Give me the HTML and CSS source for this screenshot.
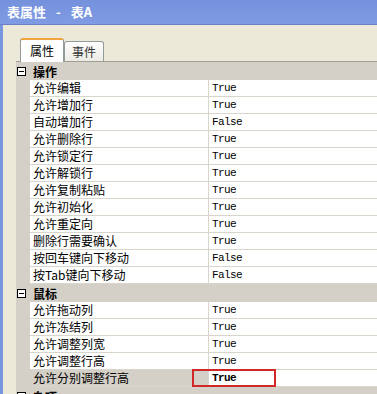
FILE: index.html
```html
<!DOCTYPE html>
<html>
<head>
<meta charset="utf-8">
<link rel="stylesheet" href="styles.css">
</head>
<body>
<div class="window">
  <div class="titlebar">表属性<span class="dash">-</span>表A</div>
  <div class="frame">
    <div class="client">
      <div class="tabs">
        <div class="tab active">属性</div>
        <div class="tab">事件</div>
      </div>
      <div class="grid">
        <div class="cat"><span class="box"></span><span class="cat-name">操作</span></div>
        <div class="row"><div class="name">允许编辑</div><div class="value">True</div></div>
        <div class="row"><div class="name">允许增加行</div><div class="value">True</div></div>
        <div class="row"><div class="name">自动增加行</div><div class="value">False</div></div>
        <div class="row"><div class="name">允许删除行</div><div class="value">True</div></div>
        <div class="row"><div class="name">允许锁定行</div><div class="value">True</div></div>
        <div class="row"><div class="name">允许解锁行</div><div class="value">True</div></div>
        <div class="row"><div class="name">允许复制粘贴</div><div class="value">True</div></div>
        <div class="row"><div class="name">允许初始化</div><div class="value">True</div></div>
        <div class="row"><div class="name">允许重定向</div><div class="value">True</div></div>
        <div class="row"><div class="name">删除行需要确认</div><div class="value">True</div></div>
        <div class="row"><div class="name">按回车键向下移动</div><div class="value">False</div></div>
        <div class="row"><div class="name">按Tab键向下移动</div><div class="value">False</div></div>
        <div class="cat"><span class="box"></span><span class="cat-name">鼠标</span></div>
        <div class="row"><div class="name">允许拖动列</div><div class="value">True</div></div>
        <div class="row"><div class="name">允许冻结列</div><div class="value">True</div></div>
        <div class="row"><div class="name">允许调整列宽</div><div class="value">True</div></div>
        <div class="row"><div class="name">允许调整行高</div><div class="value">True</div></div>
        <div class="row selected"><div class="name">允许分别调整行高</div><div class="value">True</div><span class="mark"></span></div>
        <div class="cat"><span class="box"></span><span class="cat-name">杂项</span></div>
      </div>
    </div>
  </div>
</div>
</body>
</html>
```
FILE: styles.css
```css
html, body {
  margin: 0;
  padding: 0;
  width: 377px;
  height: 394px;
  overflow: hidden;
  background: #ece9d8;
}
.window {
  width: 377px;
  height: 394px;
  display: flex;
  flex-direction: column;
  font-family: "Noto Sans CJK SC", sans-serif;
  font-size: 12px;
  color: #000;
}
.titlebar {
  height: 24px;
  line-height: 24px;
  border-bottom: 1px solid #6a7fc6;
  background: linear-gradient(#7591dc, #7e9be3);
  color: #fff;
  font-weight: bold;
  font-size: 13px;
  padding-left: 7px;
  white-space: nowrap;
}
.dash {
  margin: 0 10px 0 10px;
}
.frame {
  flex: 1;
  display: flex;
  border-left: 3px solid #7a96df;
}
.client {
  flex: 1;
  display: flex;
  flex-direction: column;
  padding-left: 13px;
  background: #ece9d8;
}
.tabs {
  height: 36px;
  border-bottom: 1px solid #a19f92;
  display: flex;
  align-items: flex-end;
  padding-left: 4px;
}
.tab {
  height: 19px;
  width: 38px;
  border: 1px solid #919b9c;
  border-bottom: none;
  border-radius: 3px 3px 0 0;
  background: linear-gradient(#fefefe, #ecebe4);
  text-align: center;
  line-height: 19px;
  color: #333;
}
.tab.active {
  height: 22px;
  width: 42px;
  line-height: 21px;
  background: #fff;
  border-top: 2px solid #f1a33c;
  margin-bottom: -1px;
  color: #000;
  position: relative;
  z-index: 1;
}
.grid {
  flex: 1;
  background: #d4d0c8;
  display: flex;
  flex-direction: column;
}
.cat {
  height: 18px;
  display: flex;
  align-items: center;
  flex-shrink: 0;
}
.box {
  width: 7px;
  height: 7px;
  border: 1px solid #000;
  margin-left: 1px;
  background: #fff;
  position: relative;
}
.box::after {
  content: "";
  position: absolute;
  left: 1px;
  right: 1px;
  top: 3px;
  height: 1px;
  background: #000;
}
.cat-name {
  font-weight: bold;
  margin-left: 7px;
}
.row {
  height: 17px;
  display: flex;
  flex-shrink: 0;
  margin-left: 14px;
  position: relative;
}
.name {
  width: 175px;
  padding-left: 3px;
  background: #fff;
  border-bottom: 1px solid #d8d5cd;
  border-right: 1px solid #d8d5cd;
  line-height: 16px;
  height: 16px;
  white-space: nowrap;
}
.value {
  flex: 1;
  background: #fff;
  border-bottom: 1px solid #d8d5cd;
  padding-left: 3px;
  height: 16px;
  line-height: 16px;
  font-family: "Liberation Mono", monospace;
  font-size: 11px;
  letter-spacing: -0.6px;
}
.selected .name {
  background: #d4d0c8;
}
.selected .value {
  font-weight: bold;
}
.mark {
  position: absolute;
  left: 162px;
  top: -1px;
  width: 80px;
  height: 14px;
  border: 2px solid #d02828;
}
```
